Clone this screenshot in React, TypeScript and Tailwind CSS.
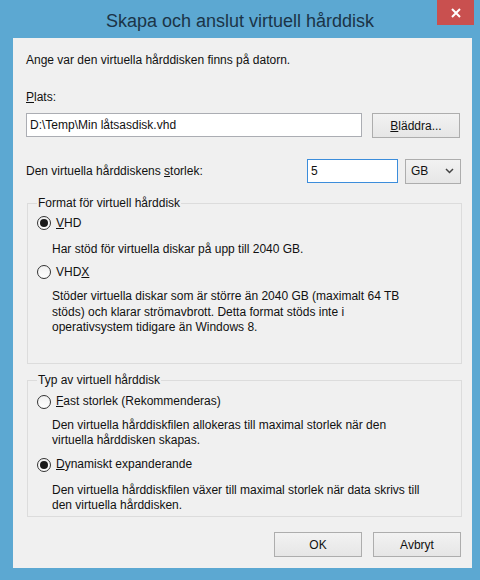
import React, { useState } from "react";

const font = { fontFamily: '"Liberation Sans", Arial, sans-serif' };

const Radio: React.FC<{ checked: boolean; onClick: () => void; children: React.ReactNode }> = ({ checked, onClick, children }) => (
  <button type="button" onClick={onClick} className="flex items-center gap-[5px] text-left">
    <span className="w-[14px] h-[14px] rounded-full border border-[#333] bg-gradient-to-b from-[#f0f0f0] to-white flex items-center justify-center">
      {checked && <span className="w-[8px] h-[8px] rounded-full bg-[#1a1a1a]" />}
    </span>
    <span>{children}</span>
  </button>
);

const WinButton: React.FC<{ children: React.ReactNode; className?: string }> = ({ children, className }) => (
  <button
    type="button"
    className={`h-[25px] border border-[#adadad] bg-gradient-to-b from-[#f2f2f2] to-[#e6e6e6] text-[12px] text-[#111] ${className ?? ""}`}
  >
    {children}
  </button>
);

export default function App() {
  const [format, setFormat] = useState("vhd");
  const [type, setType] = useState("dyn");

  return (
    <div style={font} className="w-[480px] h-[580px] bg-[#5ca8d2] flex flex-col text-[12px] text-[#111]">
      {/* title bar */}
      <div className="h-[38px] flex items-start relative">
        <div className="flex-1 text-center pt-[8px] text-[18px] text-[#1b3447]">Skapa och anslut virtuell hårddisk</div>
        <button type="button" className="absolute right-[6px] top-0 w-[37px] h-[25px] bg-[#c9504f] flex items-center justify-center">
          <svg width="10" height="10" viewBox="0 0 10 10">
            <path d="M1 1 L9 9 M9 1 L1 9" stroke="white" strokeWidth="2" />
          </svg>
        </button>
      </div>

      {/* client area */}
      <div className="ml-[13px] mr-[8px] mb-[12px] flex-1 bg-[#f0f0f0] flex flex-col pl-[13px] pr-[11px] pt-[14px]">
        <div className="leading-[16px]">Ange var den virtuella hårddisken finns på datorn.</div>

        <div className="mt-[21px] leading-[16px]">
          <span className="underline">P</span>lats:
        </div>
        <div className="mt-[8px] flex gap-[10px]">
          <div className="w-[336px] h-[24px] border border-[#abadb3] bg-white flex items-center px-[3px]">
            D:\Temp\Min låtsasdisk.vhd
          </div>
          <WinButton className="w-[88px]">
            <span className="underline">B</span>läddra...
          </WinButton>
        </div>

        <div className="mt-[21px] flex items-center h-[24px]">
          <div className="flex-1">
            Den virtuella hårddiskens <span className="underline">s</span>torlek:
          </div>
          <div className="w-[91px] h-[24px] border border-[#3c8ddb] bg-white flex items-center px-[3px]">5</div>
          <div className="ml-[7px] w-[56px] h-[25px] border border-[#adadad] bg-gradient-to-b from-[#f2f2f2] to-[#e6e6e6] flex items-center justify-between pl-[5px] pr-[6px]">
            <span>GB</span>
            <svg width="9" height="6" viewBox="0 0 9 6">
              <path d="M1 1 L4.5 4.5 L8 1" stroke="#444" strokeWidth="1.5" fill="none" />
            </svg>
          </div>
        </div>

        <fieldset className="mt-[13px] ml-[1px] mr-[-1px] border border-[#dcdcdc] h-[168px] pl-[9px] pr-[6px]">
          <legend className="px-[1px] leading-[14px]">Format för virtuell hårddisk</legend>
          <div className="flex flex-col leading-[16px] mt-[5px]">
            <Radio checked={format === "vhd"} onClick={() => setFormat("vhd")}>
              <span className="underline">V</span>HD
            </Radio>
            <div className="pl-[15px] mt-[10px]">Har stöd för virtuella diskar på upp till 2040 GB.</div>
            <div className="mt-[7px]">
              <Radio checked={format === "vhdx"} onClick={() => setFormat("vhdx")}>
                VHD<span className="underline">X</span>
              </Radio>
            </div>
            <div className="pl-[15px] mt-[9px] leading-[15.5px]">
              Stöder virtuella diskar som är större än 2040 GB (maximalt 64 TB
              <br />
              stöds) och klarar strömavbrott. Detta format stöds inte i
              <br />
              operativsystem tidigare än Windows 8.
            </div>
          </div>
        </fieldset>

        <fieldset className="mt-[9px] ml-[1px] mr-[-1px] border border-[#dcdcdc] h-[144px] pl-[9px] pr-[6px]">
          <legend className="px-[1px] leading-[14px]">Typ av virtuell hårddisk</legend>
          <div className="flex flex-col leading-[15px] mt-[7px]">
            <Radio checked={type === "fast"} onClick={() => setType("fast")}>
              <span className="underline">F</span>ast storlek (Rekommenderas)
            </Radio>
            <div className="pl-[15px] mt-[9px]">
              Den virtuella hårddiskfilen allokeras till maximal storlek när den
              <br />
              virtuella hårddisken skapas.
            </div>
            <div className="mt-[9px]">
              <Radio checked={type === "dyn"} onClick={() => setType("dyn")}>
                <span className="underline">D</span>ynamiskt expanderande
              </Radio>
            </div>
            <div className="pl-[15px] mt-[11px]">
              Den virtuella hårddiskfilen växer till maximal storlek när data skrivs till
              <br />
              den virtuella hårddisken.
            </div>
          </div>
        </fieldset>

        <div className="mt-[15px] flex justify-end gap-[11px]">
          <WinButton className="w-[88px]">OK</WinButton>
          <WinButton className="w-[88px]">Avbryt</WinButton>
        </div>
      </div>
    </div>
  );
}
